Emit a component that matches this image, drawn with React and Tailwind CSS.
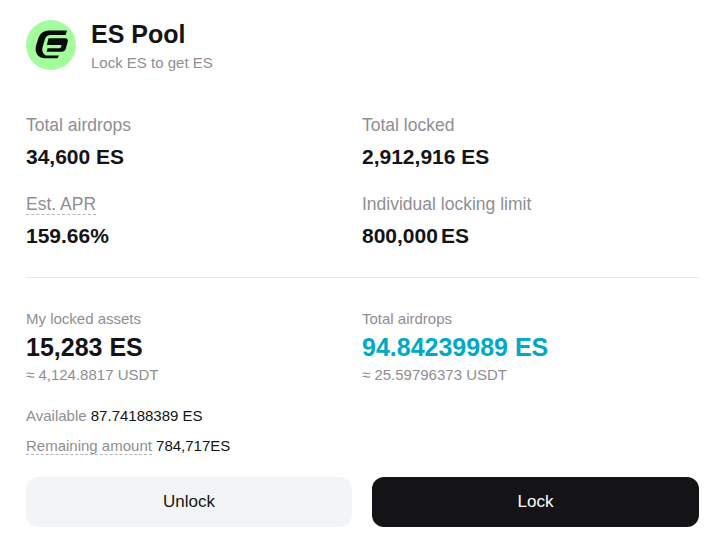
function Logo() {
  return (
    <svg width="50" height="50" viewBox="0 0 50 50" className="shrink-0">
      <circle cx="25" cy="25" r="25" fill="#a3fd9d" />
      <path d="M41 10.5H24C18 10.5 14.5 13 12.6 17.5L10.2 25C8 32.5 12 38.3 19 38.3H31.5L33 35.6H22C17.5 35.6 15.4 31.5 16.6 27L18.4 21C19.5 17 21 15 25 15H39.6Z" fill="#0b0b0b" />
      <path d="M22.5 18.2H39.2C41.4 18.2 42.3 19.6 41.7 21.8L40 28C39.4 30.2 38 31.7 35.6 31.7H20.6L21.6 28.2H33.6C34.4 28.2 34.9 27.8 35.1 27.1L35.6 25H20.8Z" fill="#0b0b0b" />
    </svg>
  )
}

function Stat({ label, value, dashed }) {
  return (
    <div>
      <div className="h-[26px] text-[17.5px] leading-[26px] text-[#8e8e93]">
        <span className={dashed ? 'inline-block h-[21px] leading-[20px] border-b border-dashed border-[#b5b5ba]' : ''}>{label}</span>
      </div>
      <div className="mt-[5px] text-[21px] leading-[28px] font-bold text-[#141416]">{value}</div>
    </div>
  )
}

export default function App() {
  return (
    <div className="w-[716px] h-[543px] bg-white pl-[26px] pr-[17px] pt-[20px] overflow-hidden font-['Liberation_Sans',Arial,sans-serif]">
      <div className="flex items-start gap-[15px]">
        <Logo />
        <div>
          <div className="text-[25px] leading-[28px] font-bold text-[#141416]">ES Pool</div>
          <div className="mt-[3px] text-[15px] leading-[24px] text-[#8e8e93]">Lock ES to get ES</div>
        </div>
      </div>

      <div className="mt-[37px] grid grid-cols-[336px_1fr] gap-y-[20px] pb-[27px] border-b border-[#e8e8ea]">
        <Stat label="Total airdrops" value="34,600 ES" />
        <Stat label="Total locked" value="2,912,916 ES" />
        <Stat label="Est. APR" value="159.66%" dashed />
        <Stat label="Individual locking limit" value={<span>800,000<span className="ml-[3px]">ES</span></span>} />
      </div>

      <div className="mt-[31px] grid grid-cols-[336px_1fr]">
        <div>
          <div className="text-[15px] leading-[20px] text-[#8e8e93]">My locked assets</div>
          <div className="mt-[2px] text-[25px] leading-[32px] font-bold text-[#141416]">15,283 ES</div>
          <div className="mt-[2px] text-[15px] leading-[20px] text-[#8e8e93]">≈ 4,124.8817 USDT</div>
        </div>
        <div>
          <div className="text-[15px] leading-[20px] text-[#8e8e93]">Total airdrops</div>
          <div className="mt-[2px] text-[25px] leading-[32px] font-bold text-[#00a8c8]">94.84239989 ES</div>
          <div className="mt-[2px] text-[15px] leading-[20px] text-[#8e8e93]">≈ 25.59796373 USDT</div>
        </div>
      </div>

      <div className="mt-[21px] text-[15px] leading-[20px] text-[#141416]">
        <span className="text-[#8e8e93]">Available</span> 87.74188389 ES
      </div>
      <div className="mt-[10px] text-[15px] leading-[20px] text-[#141416]">
        <span className="text-[#8e8e93] border-b border-dashed border-[#b5b5ba]">Remaining amount</span> 784,717ES
      </div>

      <div className="mt-[21px] flex gap-[20px]">
        <button className="w-[326px] h-[50px] rounded-[12px] bg-[#f3f4f6] text-[17px] text-[#141416]">Unlock</button>
        <button className="w-[327px] h-[50px] rounded-[12px] bg-[#141416] text-[17px] text-white">Lock</button>
      </div>
    </div>
  )
}
